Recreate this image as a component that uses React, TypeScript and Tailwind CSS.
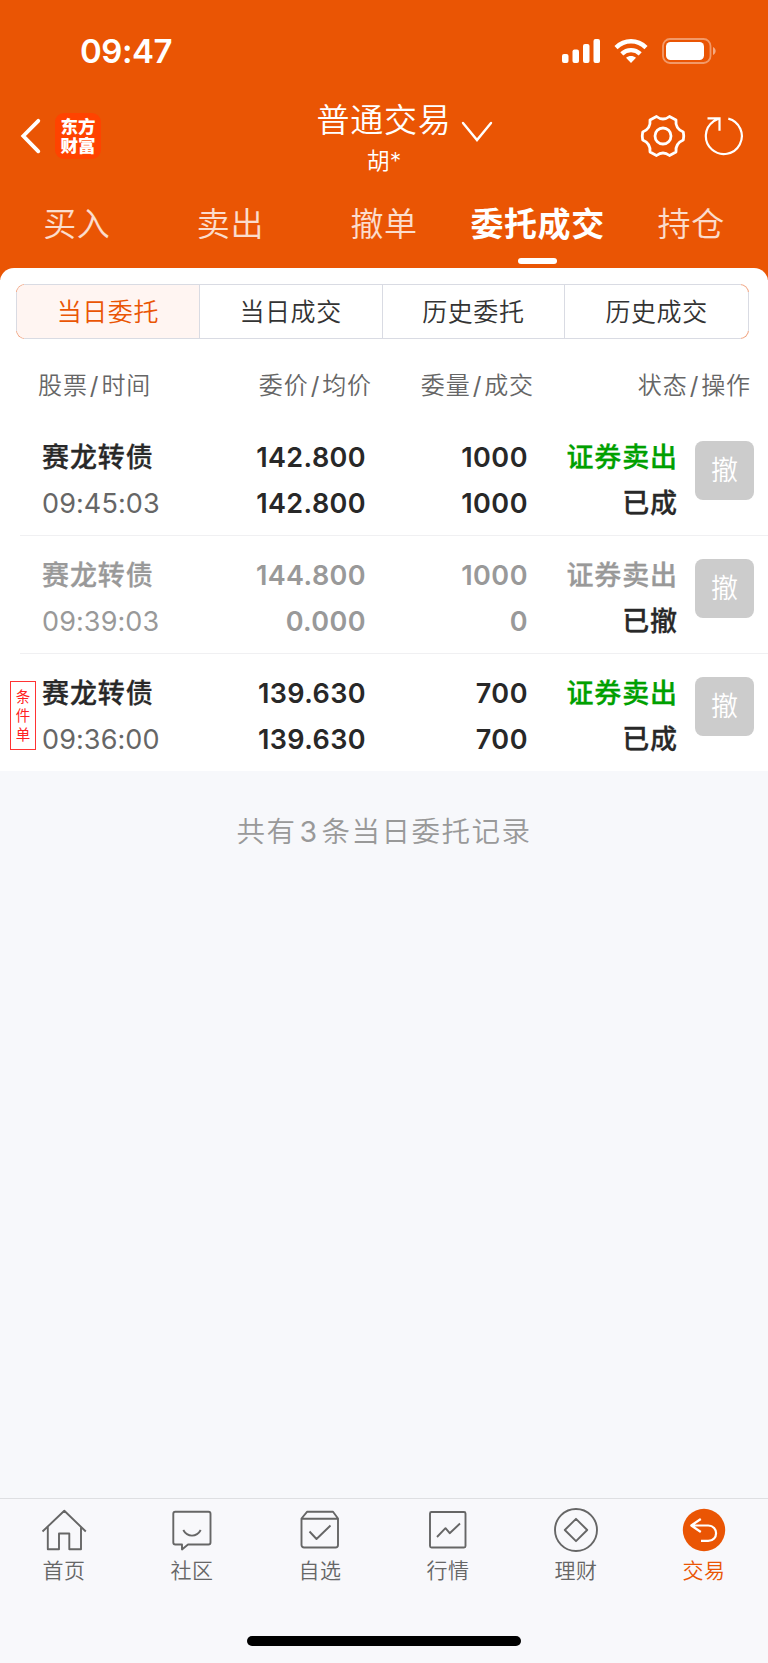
import type { ReactNode } from 'react';

interface Order {
  name: string;
  time: string;
  price: string;
  avg: string;
  qty: string;
  filled: string;
  side: string;
  status: string;
  cancelled?: boolean;
  tag?: string;
}

const tabs = ['买入', '卖出', '撤单', '委托成交', '持仓'];
const segments = ['当日委托', '当日成交', '历史委托', '历史成交'];
const columns = [
  ['股票', '时间'],
  ['委价', '均价'],
  ['委量', '成交'],
  ['状态', '操作'],
];

const orders: Order[] = [
  { name: '赛龙转债', time: '09:45:03', price: '142.800', avg: '142.800', qty: '1000', filled: '1000', side: '证券卖出', status: '已成' },
  { name: '赛龙转债', time: '09:39:03', price: '144.800', avg: '0.000', qty: '1000', filled: '0', side: '证券卖出', status: '已撤', cancelled: true },
  { name: '赛龙转债', time: '09:36:00', price: '139.630', avg: '139.630', qty: '700', filled: '700', side: '证券卖出', status: '已成', tag: '条件单' },
];

const iconProps = {
  width: 46,
  height: 46,
  viewBox: '0 0 46 46',
  fill: 'none',
  stroke: '#666',
  strokeWidth: 1.9,
  strokeLinejoin: 'round' as const,
};

const navItems: { label: string; icon: ReactNode }[] = [
  {
    label: '首页',
    icon: (
      <svg {...iconProps}>
        <path d="M1.500 24.500 23.300 3.800l21.500 20.700M6.800 20V42.300H18V26.500h10.300v15.800H40V20" />
      </svg>
    ),
  },
  {
    label: '社区',
    icon: (
      <svg {...iconProps}>
        <path d="M6.300 4.800h33.200a2 2 0 0 1 2 2V35.500a2 2 0 0 1-2 2H19l-6 5V37.500H6.300a2 2 0 0 1-2-2V6.800a2 2 0 0 1 2-2Z" />
        <path d="M14.300 23c4 7.500 13.400 7.500 17.400 0" />
      </svg>
    ),
  },
  {
    label: '自选',
    icon: (
      <svg {...iconProps}>
        <path d="M4.500 11.500 10 4.800h26l5 6.700V38a2.500 2.500 0 0 1-2.500 2.500H7A2.500 2.500 0 0 1 4.500 38ZM4.500 11.700h36.500M12.500 24.500l7 7.500L33.500 18.500" />
      </svg>
    ),
  },
  {
    label: '行情',
    icon: (
      <svg {...iconProps}>
        <rect x="5" y="5" width="35.500" height="35.500" rx="1.500" />
        <path d="m12 30 8.500-8.800 4.200 5L35 16.500" />
      </svg>
    ),
  },
  {
    label: '理财',
    icon: (
      <svg {...iconProps}>
        <circle cx="23" cy="23" r="21" />
        <path d="M23 11.800 34.200 23 23 34.200 11.800 23Z" />
      </svg>
    ),
  },
  {
    label: '交易',
    icon: (
      <svg {...iconProps} stroke="white" strokeWidth={2.2}>
        <circle cx="23" cy="23" r="21.200" fill="#ea5504" stroke="none" />
        <path d="m19.800 12-9.500 6.500 9.500 6.500M11 18.500h16.200c10.500 0 10.500 15.300 0 15.300H20" />
      </svg>
    ),
  },
];

function StatusBar() {
  return (
    <div className="flex h-[102px] items-center justify-between pl-[80px] pr-[51px]">
      <span className="text-[33px] leading-none font-semibold tracking-[-0.500px]">09:47</span>
      <div className="flex items-center">
        <svg width="39" height="24" viewBox="0 0 39 24" fill="white">
          <rect x="0" y="15" width="6.500" height="9" rx="2" />
          <rect x="10.500" y="10.500" width="6.500" height="13.500" rx="2" />
          <rect x="21" y="5" width="6.500" height="19" rx="2" />
          <rect x="31.500" y="0" width="6.500" height="24" rx="2" />
        </svg>
        <svg className="ml-[13px]" width="34" height="24" viewBox="0 0 34 24" fill="none" stroke="white" strokeWidth="4.400">
          <path d="M2 8.600C10.500.200 23.500.200 32 8.600" />
          <path d="M7.800 14.800c5.200-4.900 13.200-4.900 18.400 0" />
          <path d="M17 24l-5-5.200c2.900-2.500 7.100-2.500 10 0Z" fill="white" stroke="none" />
        </svg>
        <svg className="ml-[14px]" width="55" height="26" viewBox="0 0 55 26">
          <rect x="1" y="1" width="47.500" height="24" rx="7" fill="none" stroke="white" strokeOpacity=".4" strokeWidth="1.800" />
          <rect x="4" y="4" width="38" height="18" rx="4.500" fill="white" />
          <path d="M51 9c3.500 1.500 3.500 6.500 0 8Z" fill="white" fillOpacity=".5" />
        </svg>
      </div>
    </div>
  );
}

function TitleBar() {
  return (
    <div className="grid h-[92px] grid-cols-[1fr_auto_1fr] items-start">
      <div className="flex items-center pt-[11px] pl-[19px]">
        <svg width="22" height="36" viewBox="0 0 22 36" fill="none" stroke="white" strokeWidth="3.800" strokeLinecap="round">
          <path d="M19.300 2.800 4.300 18 19.300 33.300" />
        </svg>
        <div className="ml-[14px] flex h-[46px] w-[46px] flex-col items-center justify-center rounded-[9px] bg-[#ff4300] text-[17.500px] leading-[19.500px] font-black">
          <span>东方</span>
          <span>财富</span>
        </div>
      </div>
      <div className="flex w-[134px] flex-col items-center">
        <span className="text-[33px] leading-[36px] font-[350] tracking-[0.800px] whitespace-nowrap">普通交易</span>
        <span className="mt-[9px] text-[23px] leading-[28px] font-[350]">胡*</span>
      </div>
      <div className="flex items-center justify-between pt-[11px] pr-[24px]">
        <svg className="-mt-[8px] ml-[10px]" width="32" height="24" viewBox="0 0 32 24" fill="none" stroke="white" strokeWidth="2.400" strokeLinecap="round">
          <path d="M2 3 16 20 30 3" />
        </svg>
        <div className="flex items-center gap-[18px]">
          <svg width="46" height="46" viewBox="0 0 46 46" fill="none" stroke="white" strokeWidth="2.800" strokeLinejoin="round">
            <circle cx="23" cy="23" r="8" />
            <path d="M16.500 3.500Q23 8.500 29.500 3.500L36 7Q35 15.500 43.300 19Q44.200 23 43.300 27Q35 30.500 36 39L29.500 42.500Q23 37.500 16.500 42.500L10 39Q11 30.500 2.700 27Q1.800 23 2.700 19Q11 15.500 10 7Z" />
          </svg>
          <svg width="40" height="40" viewBox="0 0 40 40" fill="none" stroke="white" strokeWidth="2.200">
            <path d="M24.300 2.600A18 18 0 1 1 9.500 5.300L15.300 2.300M3.500 2.300h12v12.500" />
          </svg>
        </div>
      </div>
    </div>
  );
}

function OrderRow({ order }: { order: Order }) {
  const main = order.cancelled ? 'text-[#999]' : 'text-[#282828]';
  return (
    <div className="grid h-[118px] grid-cols-[42px_163px_161px_162px_150px_90px] pt-[17px] text-[27px] leading-[45.500px] font-semibold">
      <div className="pt-[10px] pl-[10px]">
        {order.tag && (
          <div className="flex h-[69px] w-[26px] flex-col items-center justify-center border border-[#f33] text-[14.500px] leading-[19px] font-normal text-[#f22]">
            {order.tag.split('').map(c => <span key={c}>{c}</span>)}
          </div>
        )}
      </div>
      <div className={main}>
        <div className="pt-px leading-[44.500px] font-medium tracking-[0.900px] [-webkit-text-stroke:0.3px]">{order.name}</div>
        <div className={`font-normal tracking-[0.100px] ${order.cancelled ? 'text-[#999]' : 'text-[#666]'}`}>{order.time}</div>
      </div>
      <div className={`text-right tracking-[0.400px] ${main}`}>
        <div>{order.price}</div>
        <div>{order.avg}</div>
      </div>
      <div className={`text-right tracking-[0.500px] ${main}`}>
        <div>{order.qty}</div>
        <div>{order.filled}</div>
      </div>
      <div className="text-right font-medium tracking-[0.900px] [-webkit-text-stroke:0.3px]">
        <div className={`pt-px leading-[44.500px] ${order.cancelled ? 'text-[#999]' : 'text-[#00a000]'}`}>{order.side}</div>
        <div className="text-[#282828]">{order.status}</div>
      </div>
      <div className="pt-[6px] pl-[17px]">
        <button className="flex h-[59px] w-[59px] items-center justify-center rounded-[8px] bg-[#ccc] text-[27px] leading-none font-[350] text-white">撤</button>
      </div>
    </div>
  );
}

export default function App() {
  return (
    <div className="flex h-[1663px] w-[768px] flex-col overflow-hidden bg-[#f7f8fb] font-[Inter,'Noto_Sans_CJK_SC',sans-serif]">
      <header className="h-[280px] bg-[#ea5504] text-white">
        <StatusBar />
        <TitleBar />
        <nav className="grid h-[74px] grid-cols-5">
          {tabs.map(tab => (
            <div key={tab} className="flex flex-col items-center pt-[8px]">
              <span className={`text-[33px] leading-[44px] tracking-[0.600px] ${tab === '委托成交' ? 'font-bold' : 'font-[350] text-white/80'}`}>{tab}</span>
              {tab === '委托成交' && <div className="mt-[12px] h-[6px] w-[39px] rounded-full bg-white" />}
            </div>
          ))}
        </nav>
      </header>

      <main className="-mt-[12px] h-[503px] rounded-t-[14px] bg-white pt-[16px]">
        {/* grey frame, orange only at the rounded corners */}
        <div className="ml-[16px] h-[55px] w-[733px] overflow-hidden rounded-[9px] bg-[#f0a07c] bg-[linear-gradient(#d9dbe3,#d9dbe3),linear-gradient(#d9dbe3,#d9dbe3)] bg-[size:100%_39px,717px_100%] bg-center bg-no-repeat p-px">
          <div className="grid h-full grid-cols-4 divide-x divide-[#d9dbe3] overflow-hidden rounded-[8px] bg-white">
            {segments.map((label, i) => (
              <div
                key={label}
                className={`flex items-center justify-center pt-[2px] text-[25px] leading-none font-[350] tracking-[0.600px] ${i === 0 ? 'bg-[#fff5f2] text-[#ea5504]' : 'text-[#333]'}`}
              >
                {label}
              </div>
            ))}
          </div>
        </div>
        <div className="grid h-[79px] grid-cols-[38px_168px_166px_162px_217px] items-center pt-[15px] text-[24px] font-[350] tracking-[0.900px] text-[#666]">
          {columns.map(([first, second], i) => (
            <span key={first} className={i === 0 ? 'col-start-2' : 'text-right'}>
              {first}<span className="mx-[2px] font-normal">/</span>{second}
            </span>
          ))}
        </div>
        {orders.map((order, i) => (
          <div key={order.time}>
            {i > 0 && <div className="-mt-px ml-[20px] h-px bg-[#f0f0f2]" />}
            <OrderRow order={order} />
          </div>
        ))}
      </main>

      <p className="mt-[41px] text-center text-[28.500px] leading-[40px] font-[350] tracking-[1.500px] text-[#999]">
        共有<span className="mx-[3px] font-normal">3</span>条当日委托记录
      </p>

      <footer className="mt-auto h-[165px] border-t border-[#dedfe2] bg-[#f8f8fb]">
        <nav className="grid h-[137px] grid-cols-6 pt-[8px]">
          {navItems.map(item => (
            <div key={item.label} className={`flex flex-col items-center ${item.label === '交易' ? 'text-[#ea5504]' : 'text-[#666]'}`}>
              {item.icon}
              <span className="mt-[3px] text-[21px] leading-[30px] font-[350] tracking-[0.600px]">{item.label}</span>
            </div>
          ))}
        </nav>
        <div className="mx-auto h-[10px] w-[274px] rounded-full bg-black" />
      </footer>
    </div>
  );
}
